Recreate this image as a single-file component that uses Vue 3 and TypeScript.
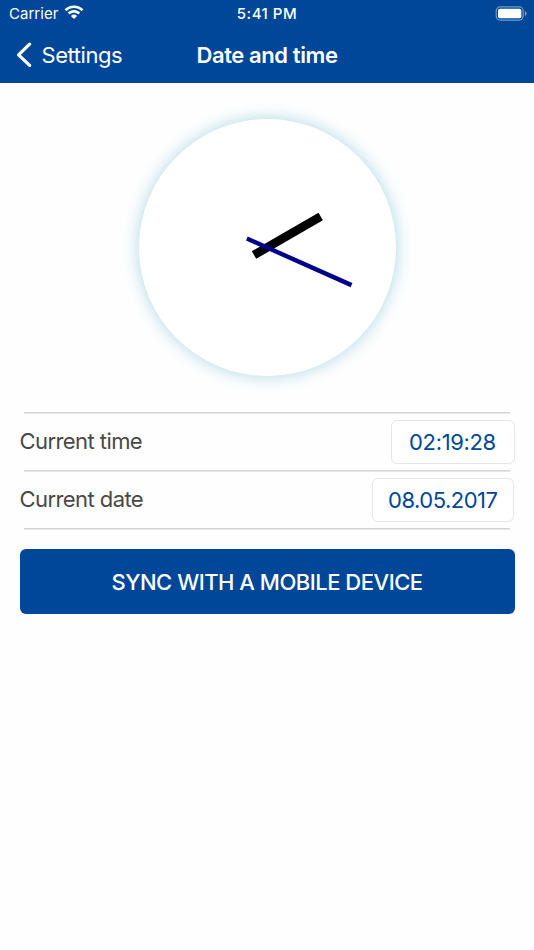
<script setup lang="ts">
import { computed, ref } from 'vue'

interface Row {
  id: string
  label: string
  value: string
}

const time = ref('02:19:28')
const date = ref('08.05.2017')

const rows = computed<Row[]>(() => [
  { id: 'time', label: 'Current time', value: time.value },
  { id: 'date', label: 'Current date', value: date.value },
])

const hourAngle = computed(() => (Number(time.value.split(':')[0]) % 12) * 30)
const minuteAngle = computed(() => Number(time.value.split(':')[1]) * 6)
</script>

<template>
  <div class="screen">
    <header class="header">
      <div class="status">
        <div class="network">
          <span class="carrier">Carrier</span>
          <svg class="wifi" width="20" height="15" viewBox="0 0 20 15" fill="#fff">
            <path d="M10 0.4 C13.7 0.4 17 1.8 19.4 4.2 L17.5 6.2 C15.5 4.2 12.9 3.1 10 3.1 C7.1 3.1 4.5 4.2 2.5 6.2 L0.6 4.2 C3 1.8 6.3 0.4 10 0.4 Z" />
            <path d="M10 5.1 C12.4 5.1 14.6 6 16.2 7.6 L14.3 9.5 C13.2 8.4 11.7 7.8 10 7.8 C8.3 7.8 6.8 8.4 5.7 9.5 L3.8 7.6 C5.4 6 7.6 5.1 10 5.1 Z" />
            <path d="M10 14 L6.9 10.9 A4.4 4.4 0 0 1 13.1 10.9 Z" />
          </svg>
        </div>
        <span class="clock-text">5:41 PM</span>
        <svg class="battery" width="32" height="15" viewBox="0 0 32 15">
          <rect x="1.2" y="0.9" width="27" height="13.2" rx="4" fill="none" stroke="#fff" stroke-opacity=".45" stroke-width="1.2" />
          <rect x="3" y="2.8" width="23.4" height="9.4" rx="2" fill="#fff" />
          <path d="M29.9 5 Q31.6 5.8 31.6 7.5 Q31.6 9.2 29.9 10 Z" fill="#fff" fill-opacity=".5" />
        </svg>
      </div>
      <nav class="nav">
        <a class="back">
          <svg width="17" height="26" viewBox="0 0 17 26" fill="none" stroke="#fff" stroke-width="3.2" stroke-linecap="round" stroke-linejoin="round">
            <path d="M13.6 2.2 L2.6 12.8 L13.6 23.4" />
          </svg>
          <span class="back-label">Settings</span>
        </a>
        <h1 class="title">Date and time</h1>
      </nav>
    </header>

    <main class="content">
      <svg class="dial" width="257" height="257" viewBox="-128 -128.5 257 257">
        <g :transform="`rotate(${hourAngle})`">
          <rect x="-4.4" y="-62" width="8.8" height="77" fill="#000" />
        </g>
        <g :transform="`rotate(${minuteAngle})`">
          <rect x="-2.2" y="-92.5" width="4.4" height="114.5" fill="#00008b" />
        </g>
      </svg>

      <section class="rows">
        <div v-for="row in rows" :key="row.id" class="row">
          <span class="label">{{ row.label }}</span>
          <button class="value" :class="row.id">{{ row.value }}</button>
        </div>
      </section>

      <button class="sync"><span class="sync-label">SYNC WITH A MOBILE DEVICE</span></button>
    </main>
  </div>
</template>

<style>
body {
  background: #fefefe;
}
</style>

<style scoped>
.screen {
  min-height: 950px;
  background: #fefefe;
  font-family: Inter, "Liberation Sans", sans-serif;
}

button {
  font-family: inherit;
  margin: 0;
  padding: 0;
}

.header {
  height: 83px;
  background: #004799;
  color: #fff;
}

.status {
  display: grid;
  grid-template-columns: 1fr auto 1fr;
  align-items: center;
  height: 27px;
  padding: 0 7px 0 9px;
}

.network {
  display: flex;
  align-items: center;
  gap: 6px;
}

.carrier {
  font-size: 15px;
  letter-spacing: 0.02px;
}

.wifi {
  margin-top: -2px;
}

.clock-text {
  margin-left: -2px;
  font-size: 15px;
  font-weight: 500;
  letter-spacing: 0.5px;
}

.battery {
  justify-self: end;
  margin-top: -1px;
}

.nav {
  display: grid;
  grid-template-columns: 1fr auto 1fr;
  align-items: center;
  height: 55px;
  padding: 0 16px;
}

.back {
  display: flex;
  align-items: center;
  gap: 8.5px;
}

.back-label {
  font-size: 22px;
  letter-spacing: -0.45px;
}

.title {
  margin: 0;
  font-size: 22px;
  font-weight: 600;
  letter-spacing: -0.4px;
}

.content {
  display: flex;
  flex-direction: column;
  padding: 36px 19.5px 0;
}

.dial {
  align-self: center;
  border-radius: 50%;
  background: #fff;
  box-shadow: 0 0 17px #add8e6;
}

.rows {
  margin-top: 36px;
  background:
    linear-gradient(#d5d5d5, #d5d5d5) center 0 / 486px 1.6px no-repeat,
    linear-gradient(#d5d5d5, #d5d5d5) center 58px / 486px 1.6px no-repeat,
    linear-gradient(#d5d5d5, #d5d5d5) center 116px / 486px 1.6px no-repeat;
  height: 118px;
}

.row {
  display: flex;
  justify-content: space-between;
  align-items: center;
  height: 58px;
  padding-top: 1px;
  box-sizing: border-box;
}

.label {
  margin-top: -2px;
  color: #484848;
  font-size: 22px;
  letter-spacing: -0.57px;
}

.value {
  box-sizing: border-box;
  height: 44px;
  border: 1px solid #e5e5e5;
  border-radius: 6px;
  background: #fff;
  color: #004799;
  font-size: 22px;
  letter-spacing: -0.35px;
}

.time {
  width: 124px;
}

.date {
  width: 141.5px;
  margin-right: 1px;
  letter-spacing: -0.5px;
}

.sync {
  height: 65px;
  margin-top: 19px;
  border: 0;
  border-radius: 6px;
  background: #004799;
  color: #fff;
  font-size: 22px;
  font-weight: 500;
  letter-spacing: -0.49px;
}
</style>
